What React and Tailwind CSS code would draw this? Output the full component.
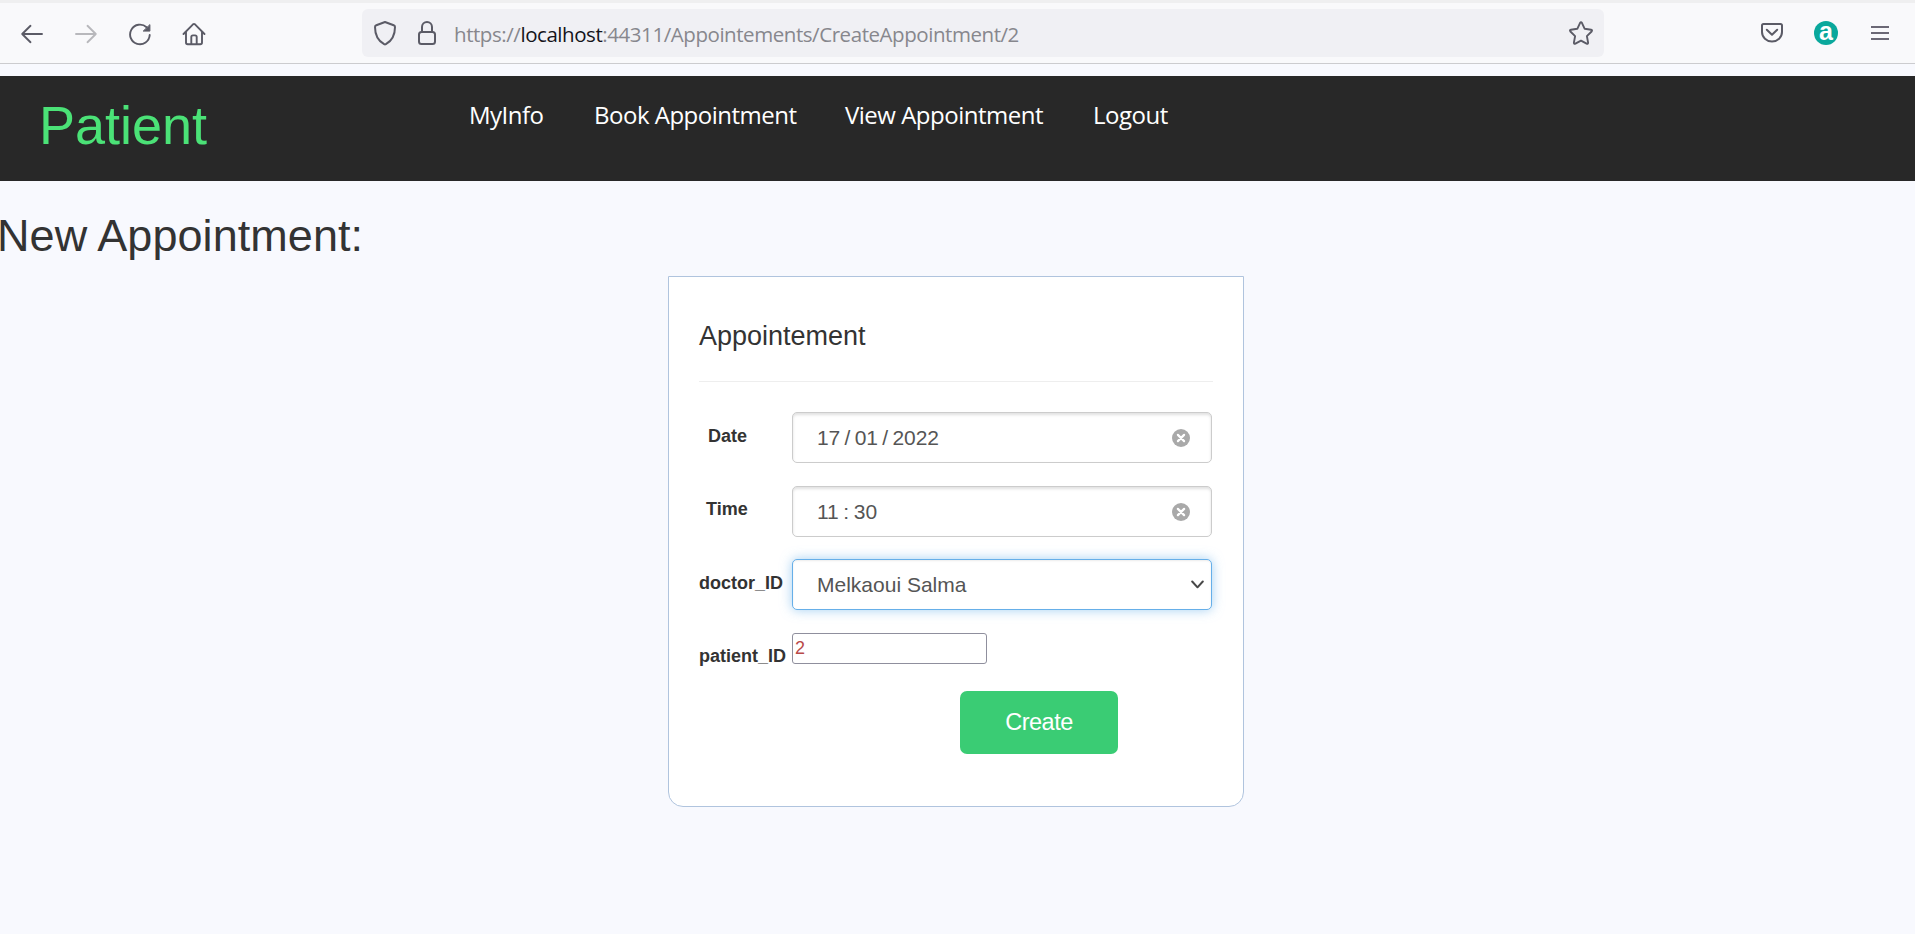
const stroke = {
  fill: "none",
  stroke: "#5b5b66",
  strokeWidth: 1.9,
  strokeLinecap: "round",
  strokeLinejoin: "round",
};

function Back() {
  return (
    <svg width="24" height="24" viewBox="0 0 24 24" {...stroke}>
      <path d="M22 12H2.2M10.500 3.800L2.200 12l8.300 8.200" />
    </svg>
  );
}

function Forward() {
  return (
    <svg width="24" height="24" viewBox="0 0 24 24" {...stroke} stroke="#b8b8bc">
      <path d="M2 12h19.800M13.500 3.800L21.800 12l-8.300 8.200" />
    </svg>
  );
}

function Reload() {
  return (
    <svg width="24" height="24" viewBox="0 0 24 24" {...stroke}>
      <path d="M21.700 13A9.800 9.800 0 1 1 18.600 5.300" />
      <path d="M21.900 3v6.100h-6.300z" fill="#5b5b66" strokeWidth="1" />
    </svg>
  );
}

function Home() {
  return (
    <svg width="24" height="24" viewBox="0 0 24 24" {...stroke}>
      <path d="M1.500 12L11 2.300q1-.8 2 0L22.500 12M4 10v10.500q0 1.700 1.700 1.700h12.600q1.700 0 1.700-1.700V10M9.300 22v-7q0-1.600 1.600-1.600h2.200q1.600 0 1.600 1.600v7" />
    </svg>
  );
}

function Shield() {
  return (
    <svg width="24" height="26" viewBox="0 0 24 26" {...stroke} strokeWidth="2">
      <path d="M12 2L20.700 5.200Q22 5.700 22 7C22 15 18.500 21 12.900 24.200q-.9.500-1.800 0C5.500 21 2 15 2 7Q2 5.700 3.300 5.200z" />
    </svg>
  );
}

function Lock() {
  return (
    <svg width="20" height="26" viewBox="0 0 20 26" {...stroke} strokeWidth="2">
      <rect x="2" y="12" width="16" height="12" rx="2.500" />
      <path d="M5 12V7a5 5 0 0 1 10 0v5" />
    </svg>
  );
}

function Star() {
  return (
    <svg width="26" height="26" viewBox="0 0 26 26" {...stroke}>
      <path d="M12.100 2.800q.9-1.400 1.800 0L16.700 8.800l6.400.9q1.600.4.500 1.800l-4.700 4.600 1.200 6.500q0 1.700-1.500 1.100L13 20.600l-5.600 3.100q-1.500.6-1.500-1.100l1.200-6.500-4.700-4.600q-1.100-1.400.5-1.800l6.400-.9z" />
    </svg>
  );
}

function Pocket() {
  return (
    <svg width="24" height="22" viewBox="0 0 24 22" {...stroke} strokeWidth="2">
      <path d="M3.500 2h17q1.500 0 1.500 1.500V10a10 9.500 0 0 1-20 0V3.500Q2 2 3.500 2z" />
      <path d="M6.800 7.700L12 12.800l5.200-5.100" />
    </svg>
  );
}

function Clear() {
  return (
    <svg width="18" height="18" viewBox="0 0 18 18">
      <circle cx="9" cy="9" r="9" fill="#a9a9a9" />
      <path d="M5.900 5.900l6.200 6.200M12.100 5.900l-6.200 6.200" stroke="#fff" strokeWidth="2.200" strokeLinecap="round" />
    </svg>
  );
}

function Toolbar() {
  return (
    <div className="h-16 border-t-[3px] border-b border-t-[#efeff0] border-b-[#cccccf] bg-[#f9f9fb] flex items-start">
      <div className="flex w-[362px] shrink-0 gap-[30px] pl-5 pt-[19px]">
        <Back />
        <Forward />
        <Reload />
        <Home />
      </div>
      <div className="mt-[6px] flex h-12 w-[1242px] shrink-0 items-center rounded-[6px] bg-[#f0f0f4] pl-[11px] pr-[10px]">
        <Shield />
        <span className="ml-[20px]"><Lock /></span>
        <p className="ml-[17px] mt-[2px] flex-1 whitespace-nowrap font-['Open_Sans',sans-serif] text-[20.500px] leading-[28px] tracking-[-0.440px] text-[#87878d]">
          https://<span className="text-[#15141a]">localhost</span>:44311/Appointements/CreateAppointment/2
        </p>
        <Star />
      </div>
      <div className="flex flex-1 items-center pl-[156px] pt-[18px]">
        <Pocket />
        <span className="ml-[30px] flex h-6 w-6 items-center justify-center rounded-full bg-[#0aa89c] pb-[4px] font-['Liberation_Sans',sans-serif] text-[25px] font-bold leading-none text-white">
          a
        </span>
        <div className="ml-[33px] flex flex-col gap-[4px]">
          <i className="h-[2px] w-[18px] bg-[#6b6875]" />
          <i className="h-[2px] w-[18px] bg-[#6b6875]" />
          <i className="h-[2px] w-[18px] bg-[#6b6875]" />
        </div>
      </div>
    </div>
  );
}

function Header() {
  return (
    <header className="mt-3 flex h-[105px] items-start bg-[#282828]">
      <div className="w-[469px] pl-[39px] pt-[18px] text-[54px] leading-[62px] text-[#4be277]">Patient</div>
      <nav className="flex pt-[23px] font-['Open_Sans',sans-serif] text-[24px] leading-[32px] tracking-[-0.500px] text-white">
        <a className="w-[125px] whitespace-nowrap">MyInfo</a>
        <a className="w-[251px] whitespace-nowrap">Book Appointment</a>
        <a className="w-[248px] whitespace-nowrap">View Appointment</a>
        <a className="whitespace-nowrap">Logout</a>
      </nav>
    </header>
  );
}

const field =
  "flex h-[51px] w-[420px] items-center rounded-[5px] border bg-white pl-6 text-[21px] text-[#555]";

function Row({ label, labelClass, children }) {
  return (
    <div className="flex">
      <label className={"w-[93px] shrink-0 whitespace-nowrap text-[18px] font-bold leading-[20px] text-[#333] " + labelClass}>
        {label}
      </label>
      {children}
    </div>
  );
}

export default function App() {
  return (
    <div className="h-[934px] w-[1915px] overflow-hidden bg-[#f8f9fe] font-['Liberation_Sans',Arial,sans-serif]">
      <Toolbar />
      <Header />
      <h1 className="-ml-[3px] mt-[29px] text-[45px] leading-[52px] tracking-[0.060px] text-[#333]">New Appointment:</h1>
      <main className="ml-[668px] mt-[14px] h-[531px] w-[576px] rounded-b-[15px] border border-[#b0c4de] bg-white pl-[30px] pr-[30px]">
        <h4 className="pt-[43px] text-[27px] leading-[32px] text-[#333]">Appointement</h4>
        <hr className="mt-[29px] border-[#eee]" />
        <div className="mt-[30px] flex flex-col">
          <Row label="Date" labelClass="pl-[9px] pt-[14px]">
            <div className={field + " justify-between border-[#ccc] pr-[21px] shadow-[inset_0_2px_3px_rgba(0,0,0,0.12)]"}>
              <span className="tracking-[-0.100px] [word-spacing:-1.300px]">17 / 01 / 2022</span>
              <Clear />
            </div>
          </Row>
          <div className="h-[23px]" />
          <Row label="Time" labelClass="pl-[7px] pt-[13px]">
            <div className={field + " justify-between border-[#ccc] pr-[21px] shadow-[inset_0_2px_3px_rgba(0,0,0,0.12)]"}>
              <span className="[word-spacing:-1.300px]">11 : 30</span>
              <Clear />
            </div>
          </Row>
          <div className="h-[22px]" />
          <Row label="doctor_ID" labelClass="pt-[14px]">
            <div className={field + " justify-between border-[#66afe9] pr-[7px] shadow-[inset_0_1px_2px_rgba(0,0,0,0.075),0_0_12px_rgba(102,175,233,0.6)]"}>
              <span>Melkaoui Salma</span>
              <svg width="13" height="9" viewBox="0 0 13 9" fill="none" stroke="#484848" strokeWidth="2" strokeLinecap="round" strokeLinejoin="round">
                <path d="M1.200 1.500l5.300 5.800 5.300-5.800" />
              </svg>
            </div>
          </Row>
          <div className="h-[23px]" />
          <Row label="patient_ID" labelClass="pt-[13px]">
            <div className="flex h-[31px] w-[195px] items-center rounded-[3px] border border-[#8f8f9d] bg-white pl-[2px] text-[18px] text-[#b94a48]">
              2
            </div>
          </Row>
        </div>
        <button className="ml-[261px] mt-[25px] flex h-[63px] w-[158px] items-center justify-center rounded-[7px] bg-[#3acc74] text-[23.500px] tracking-[-0.500px] text-white">
          Create
        </button>
      </main>
    </div>
  );
}
